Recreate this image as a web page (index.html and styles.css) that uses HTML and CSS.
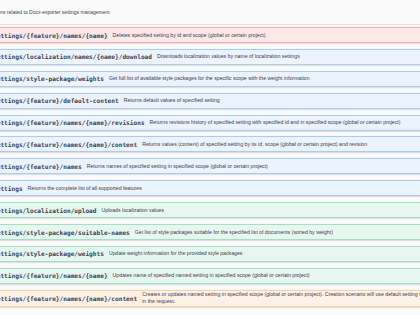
FILE: index.html
```html
<!DOCTYPE html>
<html lang="en">
<head>
  <meta charset="UTF-8">
  <title>Settings API</title>
  <link rel="stylesheet" href="styles.css">
</head>
<body>

  <div class="tag">
    <p class="tag-desc">Operations related to Docx-exporter settings management</p>
  </div>

  <div class="ops">
    <div class="op op-delete">
      <span class="path">settings/{feature}/names/{name}</span>
      <span class="desc">Deletes specified setting by id and scope (global or certain project)</span>
    </div>
    <div class="op op-get">
      <span class="path">settings/localization/names/{name}/download</span>
      <span class="desc">Downloads localization values by name of localization settings</span>
    </div>
    <div class="op op-get">
      <span class="path">settings/style-package/weights</span>
      <span class="desc">Get full list of available style packages for the specific scope with the weight information</span>
    </div>
    <div class="op op-get">
      <span class="path">settings/{feature}/default-content</span>
      <span class="desc">Returns default values of specified setting</span>
    </div>
    <div class="op op-get">
      <span class="path">settings/{feature}/names/{name}/revisions</span>
      <span class="desc">Returns revisions history of specified setting with specified id and in specified scope (global or certain project)</span>
    </div>
    <div class="op op-get">
      <span class="path">settings/{feature}/names/{name}/content</span>
      <span class="desc">Returns values (content) of specified setting by its id, scope (global or certain project) and revision</span>
    </div>
    <div class="op op-get">
      <span class="path">settings/{feature}/names</span>
      <span class="desc">Returns names of specified setting in specified scope (global or certain project)</span>
    </div>
    <div class="op op-get">
      <span class="path">settings</span>
      <span class="desc">Returns the complete list of all supported features</span>
    </div>
    <div class="op op-post">
      <span class="path">settings/localization/upload</span>
      <span class="desc">Uploads localization values</span>
    </div>
    <div class="op op-post">
      <span class="path">settings/style-package/suitable-names</span>
      <span class="desc">Get list of style packages suitable for the specified list of documents (sorted by weight)</span>
    </div>
    <div class="op op-post">
      <span class="path">settings/style-package/weights</span>
      <span class="desc">Update weight information for the provided style packages</span>
    </div>
    <div class="op op-post">
      <span class="path">settings/{feature}/names/{name}</span>
      <span class="desc">Updates name of specified named setting in specified scope (global or certain project)</span>
    </div>
    <div class="op op-put">
      <span class="path">settings/{feature}/names/{name}/content</span>
      <span class="desc">Creates or updates named setting in specified scope (global or certain project). Creation scenario will use default setting values if not provided in the request.</span>
    </div>
  </div>

</body>
</html>
```

FILE: styles.css
```css
* {
  box-sizing: border-box;
}

body {
  margin: 0;
  width: 420px;
  height: 315px;
  overflow: hidden;
  background: #fafafa;
  font-family: 'Liberation Sans', Arial, sans-serif;
  color: #3b4151;
}

.tag {
  height: 25px;
  display: flex;
  align-items: center;
  border-bottom: 1px solid #e1e2e4;
}

.tag-desc {
  margin: 0 0 0 -19px;
  font-size: 5px;
  white-space: nowrap;
}

.ops {
  margin-left: -8px;
  width: 528px;
  padding-top: 2px;
}

.op {
  display: flex;
  align-items: center;
  min-height: 16px;
  padding: 0.5px 0;
  margin-bottom: 5.9px;
  border: 1px solid;
  border-radius: 1.5px;
  box-shadow: 0 0.5px 1px rgba(0, 0, 0, 0.12);
}

.op-delete {
  background: #fde8e8;
  border-color: #f5aeae;
}

.op-get {
  background: #ebf3fc;
  border-color: #a9cdf2;
}

.op-post {
  background: #e8f6f0;
  border-color: #a3e0c7;
}

.op-put {
  background: #fef1e5;
  border-color: #fad2a6;
}

.path {
  font-family: 'DejaVu Sans Mono', monospace;
  font-weight: bold;
  font-size: 6.15px;
  white-space: nowrap;
  margin-right: 5px;
}

.desc {
  flex: 1;
  font-size: 5.2px;
  line-height: 7px;
  padding-right: 47px;
}
```
